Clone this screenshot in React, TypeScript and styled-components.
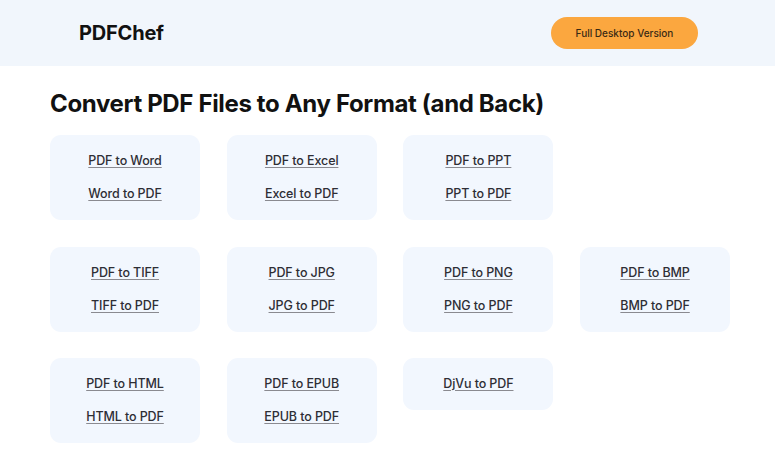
import {FC} from "react";
import styled, {createGlobalStyle} from "styled-components";

const GlobalStyle = createGlobalStyle`
  body {
    margin: 0;
    background: #ffffff;
    font-family: Inter, "Noto Sans", sans-serif;
    color: #1b1b1f;
  }
`;

const Header = styled.header`
  height: 66px;
  background: #f1f6fc;
  display: flex;
  align-items: center;
  justify-content: space-between;
  padding: 0 77px 0 79px;
`;

const Logo = styled.div`
  font-size: 20px;
  font-weight: 700;
  letter-spacing: -0.2px;
  color: #111;
`;

const DesktopButton = styled.button`
  width: 147px;
  height: 32px;
  border: none;
  border-radius: 16px;
  background: #fba73f;
  color: #3a2a14;
  font-family: Inter, sans-serif;
  font-size: 10px;
  font-weight: 500;
  cursor: pointer;
`;

const Main = styled.main`
  padding: 24px 0 0 50px;
`;

const Title = styled.h1`
  margin: 0 0 17px;
  font-size: 24px;
  line-height: 28px;
  font-weight: 700;
  letter-spacing: -0.35px;
  color: #111;
`;

const Groups = styled.div`
  display: flex;
  flex-direction: column;
  gap: 26.5px;
`;

const Row = styled.div`
  display: grid;
  grid-template-columns: repeat(4, 150px);
  column-gap: 26.7px;
  align-items: start;
`;

const Card = styled.div`
  box-sizing: border-box;
  padding: 18px 0;
  border-radius: 11px;
  background: #f2f7fe;
  display: flex;
  flex-direction: column;
  align-items: center;
  gap: 17px;
`;

const Link = styled.a`
  font-size: 12.5px;
  line-height: 16px;
  font-weight: 500;
  color: #2e2e35;
  text-decoration: underline;
  text-decoration-color: #8a8a90;
  text-underline-offset: 2px;
  letter-spacing: -0.1px;
  cursor: pointer;
`;

const rows: string[][][] = [
  [
    ["PDF to Word", "Word to PDF"],
    ["PDF to Excel", "Excel to PDF"],
    ["PDF to PPT", "PPT to PDF"],
  ],
  [
    ["PDF to TIFF", "TIFF to PDF"],
    ["PDF to JPG", "JPG to PDF"],
    ["PDF to PNG", "PNG to PDF"],
    ["PDF to BMP", "BMP to PDF"],
  ],
  [
    ["PDF to HTML", "HTML to PDF"],
    ["PDF to EPUB", "EPUB to PDF"],
    ["DjVu to PDF"],
  ],
];

const App: FC = () => {
  return (
    <>
      <GlobalStyle/>
      <Header>
        <Logo>PDFChef</Logo>
        <DesktopButton>Full Desktop Version</DesktopButton>
      </Header>
      <Main>
        <Title>Convert PDF Files to Any Format (and Back)</Title>
        <Groups>
          {rows.map((row, i) => (
            <Row key={i}>
              {row.map((links) => (
                <Card key={links[0]}>
                  {links.map((l) => <Link key={l}>{l}</Link>)}
                </Card>
              ))}
            </Row>
          ))}
        </Groups>
      </Main>
    </>
  )
};

export default App;
